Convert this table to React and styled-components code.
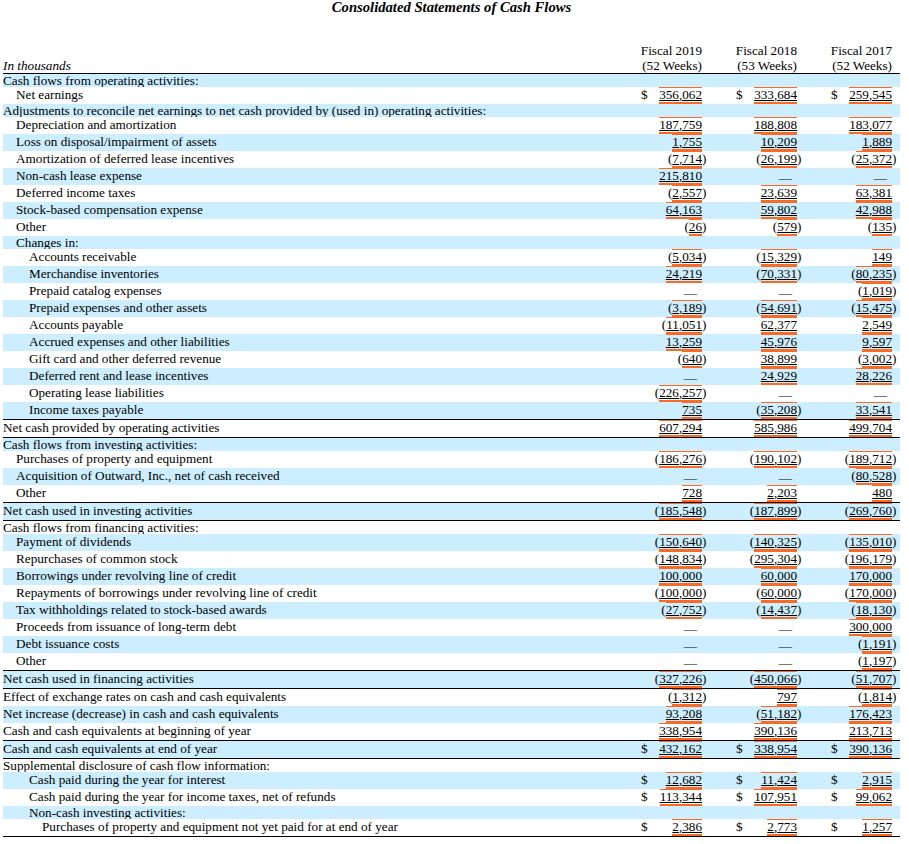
import React from 'react';
import styled, { createGlobalStyle } from 'styled-components';

const GlobalStyle = createGlobalStyle`
  html, body { margin: 0; padding: 0; background: #fff; }
  body {
    font-family: "Liberation Serif", "Times New Roman", serif;
    font-size: 13.2px;
    color: #000;
  }
`;

const ORANGE = '#fb6a25';
const BLUE = '#cceeff';

const Page = styled.div`
  width: 897px;
  padding: 0 9px 0 3px;
`;

const Title = styled.h1`
  margin: 0 0 29px;
  font-size: 14.67px;
  line-height: 14px;
  font-weight: bold;
  font-style: italic;
  text-align: center;
`;

const Table = styled.div`
  display: flex;
  flex-direction: column;
`;

const HeaderRow = styled.div`
  display: grid;
  grid-template-columns: 1fr repeat(3, 95px);
  align-items: end;
  border-bottom: 1px solid #000;
  line-height: 15px;
`;

const UnitsLabel = styled.div`
  font-style: italic;
`;

const YearHead = styled.div`
  text-align: right;
  padding-right: 8px;
  white-space: nowrap;
`;

const Row = styled.div`
  display: grid;
  grid-template-columns: 1fr repeat(3, 95px);
  height: ${(p) => (p.$section ? 13 : 17)}px;
  background: ${(p) => (p.$shaded ? BLUE : '#fff')};
  border-top: ${(p) => (p.$total ? '1px solid #000' : 'none')};
  border-bottom: ${(p) => (p.$total || p.$closing ? '1px solid #000' : 'none')};
`;

const Label = styled.div`
  display: flex;
  align-items: flex-start;
  padding-left: ${(p) => p.$level * 13}px;
  padding-top: ${(p) => (p.$section ? 0 : 1)}px;
  line-height: 13px;
  white-space: nowrap;
`;

const Value = styled.div`
  display: flex;
  align-items: flex-start;
  justify-content: flex-end;
  padding: 0 3px 0 26px;
  line-height: 13px;
  white-space: nowrap;
`;

const Glyph = styled.span`
  display: block;
  padding-top: 1px;
`;

const Dollar = styled(Glyph)`
  margin-right: auto;
`;

const Figure = styled.span`
  display: block;
  border-top: 1px solid ${ORANGE};
  border-bottom: 2px solid ${ORANGE};
  padding-bottom: 1px;
  text-decoration: underline;
  text-decoration-thickness: 1px;
`;

const CloseSlot = styled(Glyph)`
  width: 5px;
`;

const Dash = styled(Glyph)`
  padding-top: 3px;
  margin-right: 5px;
`;

const rows = [
  { label: 'Cash flows from operating activities:', level: 0, section: true },
  { label: 'Net earnings', level: 1, dollar: true, values: [356062, 333684, 259545] },
  { label: 'Adjustments to reconcile net earnings to net cash provided by (used in) operating activities:', level: 0, section: true },
  { label: 'Depreciation and amortization', level: 1, values: [187759, 188808, 183077] },
  { label: 'Loss on disposal/impairment of assets', level: 1, values: [1755, 10209, 1889] },
  { label: 'Amortization of deferred lease incentives', level: 1, values: [-7714, -26199, -25372] },
  { label: 'Non-cash lease expense', level: 1, values: [215810, null, null] },
  { label: 'Deferred income taxes', level: 1, values: [-2557, 23639, 63381] },
  { label: 'Stock-based compensation expense', level: 1, values: [64163, 59802, 42988] },
  { label: 'Other', level: 1, values: [-26, -579, -135] },
  { label: 'Changes in:', level: 1, section: true },
  { label: 'Accounts receivable', level: 2, values: [-5034, -15329, 149] },
  { label: 'Merchandise inventories', level: 2, values: [24219, -70331, -80235] },
  { label: 'Prepaid catalog expenses', level: 2, values: [null, null, -1019] },
  { label: 'Prepaid expenses and other assets', level: 2, values: [-3189, -54691, -15475] },
  { label: 'Accounts payable', level: 2, values: [-11051, 62377, 2549] },
  { label: 'Accrued expenses and other liabilities', level: 2, values: [13259, 45976, 9597] },
  { label: 'Gift card and other deferred revenue', level: 2, values: [-640, 38899, -3002] },
  { label: 'Deferred rent and lease incentives', level: 2, values: [null, 24929, 28226] },
  { label: 'Operating lease liabilities', level: 2, values: [-226257, null, null] },
  { label: 'Income taxes payable', level: 2, values: [735, -35208, 33541] },
  { label: 'Net cash provided by operating activities', level: 0, total: true, values: [607294, 585986, 499704] },
  { label: 'Cash flows from investing activities:', level: 0, section: true },
  { label: 'Purchases of property and equipment', level: 1, values: [-186276, -190102, -189712] },
  { label: 'Acquisition of Outward, Inc., net of cash received', level: 1, values: [null, null, -80528] },
  { label: 'Other', level: 1, values: [728, 2203, 480] },
  { label: 'Net cash used in investing activities', level: 0, total: true, values: [-185548, -187899, -269760] },
  { label: 'Cash flows from financing activities:', level: 0, section: true },
  { label: 'Payment of dividends', level: 1, values: [-150640, -140325, -135010] },
  { label: 'Repurchases of common stock', level: 1, values: [-148834, -295304, -196179] },
  { label: 'Borrowings under revolving line of credit', level: 1, values: [100000, 60000, 170000] },
  { label: 'Repayments of borrowings under revolving line of credit', level: 1, values: [-100000, -60000, -170000] },
  { label: 'Tax withholdings related to stock-based awards', level: 1, values: [-27752, -14437, -18130] },
  { label: 'Proceeds from issuance of long-term debt', level: 1, values: [null, null, 300000] },
  { label: 'Debt issuance costs', level: 1, values: [null, null, -1191] },
  { label: 'Other', level: 1, values: [null, null, -1197] },
  { label: 'Net cash used in financing activities', level: 0, total: true, values: [-327226, -450066, -51707] },
  { label: 'Effect of exchange rates on cash and cash equivalents', level: 0, values: [-1312, 797, -1814] },
  { label: 'Net increase (decrease) in cash and cash equivalents', level: 0, values: [93208, -51182, 176423] },
  { label: 'Cash and cash equivalents at beginning of year', level: 0, values: [338954, 390136, 213713] },
  { label: 'Cash and cash equivalents at end of year', level: 0, total: true, dollar: true, values: [432162, 338954, 390136] },
  { label: 'Supplemental disclosure of cash flow information:', level: 0, section: true },
  { label: 'Cash paid during the year for interest', level: 2, dollar: true, values: [12682, 11424, 2915] },
  { label: 'Cash paid during the year for income taxes, net of refunds', level: 2, dollar: true, values: [113344, 107951, 99062] },
  { label: 'Non-cash investing activities:', level: 2, section: true },
  { label: 'Purchases of property and equipment not yet paid for at end of year', level: 3, dollar: true, closing: true, values: [2386, 2773, 1257] },
];

const fmt = (n) => Math.abs(n).toLocaleString('en-US');

function Cell({ value, dollar }) {
  const negative = value !== null && value < 0;
  return (
    <Value>
      {dollar && <Dollar>$</Dollar>}
      {value === null ? (
        <Dash>—</Dash>
      ) : (
        <>
          {negative && <Glyph>(</Glyph>}
          <Figure>{fmt(value)}</Figure>
        </>
      )}
      <CloseSlot>{negative ? ')' : ''}</CloseSlot>
    </Value>
  );
}

export default function App() {
  return (
    <>
      <GlobalStyle />
      <Page>
        <Title>Consolidated Statements of Cash Flows</Title>
        <Table>
          <HeaderRow>
            <UnitsLabel>In thousands</UnitsLabel>
            <YearHead>Fiscal 2019<br />(52 Weeks)</YearHead>
            <YearHead>Fiscal 2018<br />(53 Weeks)</YearHead>
            <YearHead>Fiscal 2017<br />(52 Weeks)</YearHead>
          </HeaderRow>
          {rows.map((r, i) => (
            <Row
              key={i}
              $shaded={i % 2 === 0}
              $section={r.section}
              $total={r.total}
              $closing={r.closing}
            >
              <Label $level={r.level} $section={r.section}>{r.label}</Label>
              {r.values
                ? r.values.map((v, j) => <Cell key={j} value={v} dollar={r.dollar} />)
                : [0, 1, 2].map((j) => <Value key={j} />)}
            </Row>
          ))}
        </Table>
      </Page>
    </>
  );
}
